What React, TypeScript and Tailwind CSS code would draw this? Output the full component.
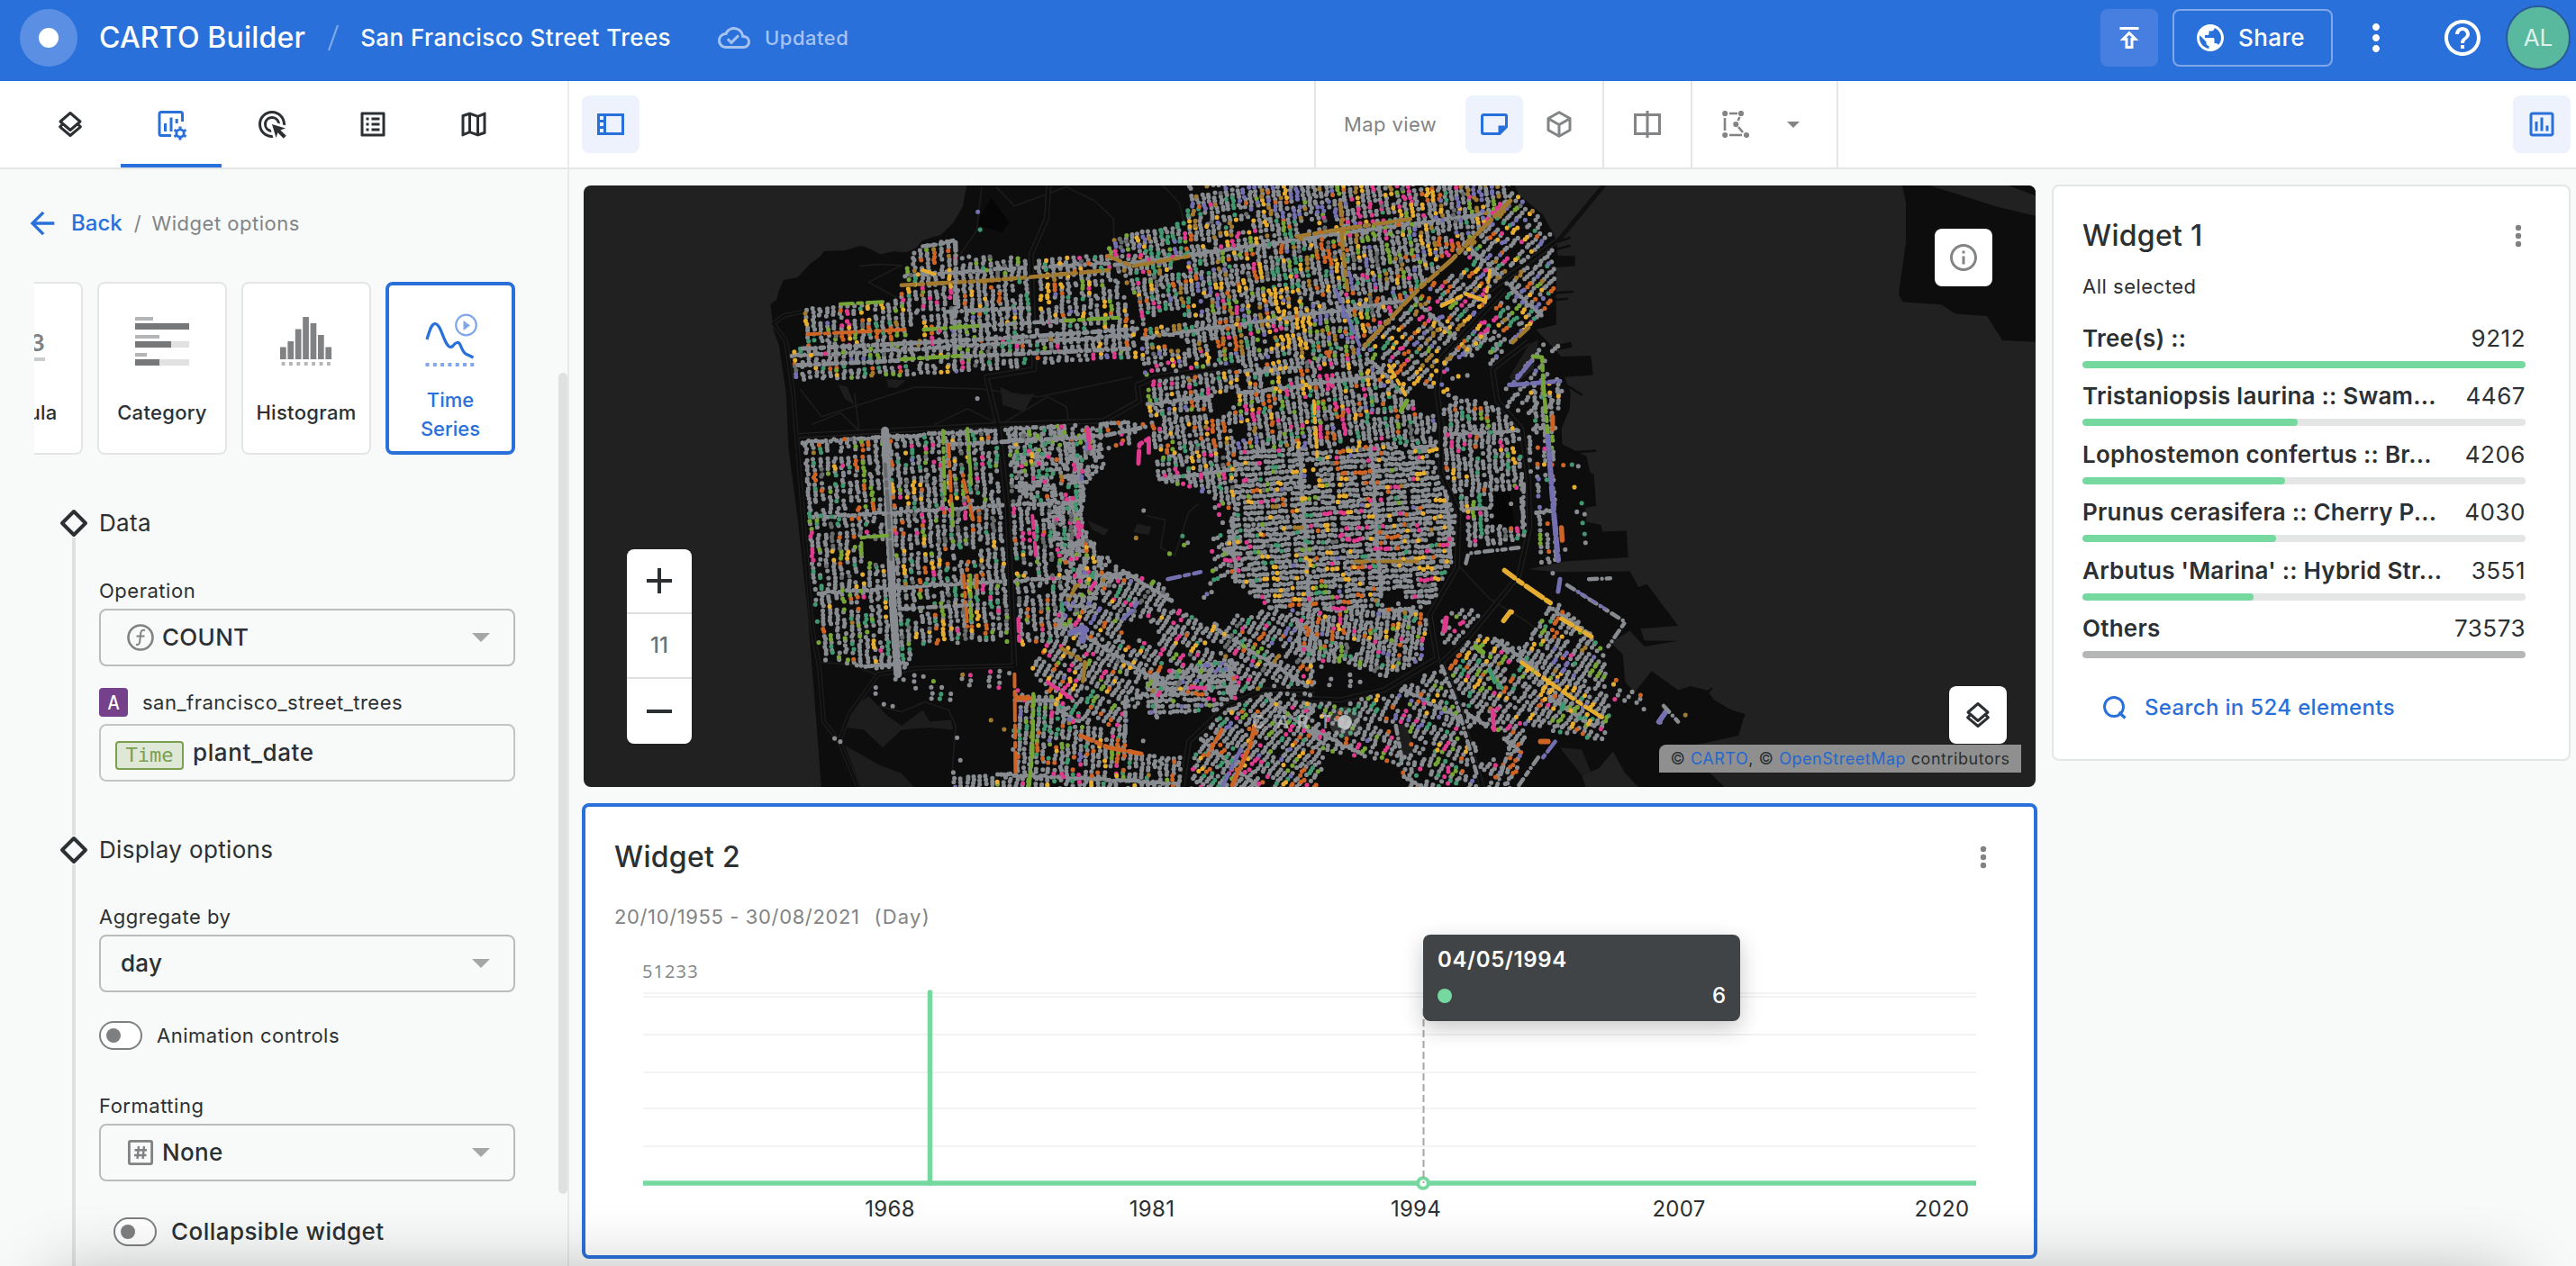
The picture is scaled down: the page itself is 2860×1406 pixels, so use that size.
import { useMemo } from "react";
import type { ReactNode } from "react";
import {
  MdAdsClick,
  MdArrowBack,
  MdHelpOutline,
  MdInfoOutline,
  MdMoreVert,
  MdOutlineCloudDone,
  MdOutlineInsertChartOutlined,
  MdOutlineListAlt,
  MdOutlineMap,
  MdOutlinePublish,
  MdPublic,
} from "react-icons/md";

/* ------------------------------------------------------------------ */
/* Map geometry: two base sheets, west and east, in their own units    */
/* ------------------------------------------------------------------ */

type Pt = [number, number];

function pairs(nums: number[], ox: number, sx: number): Pt[] {
  const out: Pt[] = [];
  for (let i = 0; i < nums.length; i += 2) out.push([ox + nums[i] * sx, 190 + nums[i + 1] * 0.44]);
  return out;
}
const W = (...n: number[]) => pairs(n, 640, 0.523);
const E = (...n: number[]) => pairs(n, 1440, 0.5357);

const LAND: Pt[] = [
  ...W(829, 30, 820, 90, 800, 130, 775, 160, 735, 175, 720, 195, 700, 205, 672, 203, 645, 210, 625, 198, 605, 188, 570, 200, 525, 202, 518, 215, 495, 235, 470, 268, 440, 275, 430, 300, 425, 325, 412, 335, 418, 400, 430, 440, 445, 560, 450, 700, 470, 880, 490, 1100, 500, 1250, 510, 1400, 520, 1560),
  ...E(600, 1560, 590, 1525, 625, 1508, 655, 1465, 680, 1520, 712, 1560, 890, 1560, 840, 1500, 820, 1450, 915, 1425, 928, 1370, 900, 1360, 865, 1335, 850, 1310, 815, 1300, 790, 1310, 735, 1262, 700, 1315, 680, 1290, 675, 1220, 650, 1190, 690, 1160, 720, 1200, 790, 1186, 720, 1185, 712, 1155, 790, 1148, 725, 1042, 708, 1050, 690, 1010, 540, 1012, 480, 1005, 555, 985, 686, 975, 683, 908, 633, 910, 630, 893, 600, 885, 598, 850, 620, 845, 615, 765, 608, 762, 600, 720, 550, 690, 548, 650, 565, 600, 567, 560, 555, 520, 614, 515, 609, 466, 548, 468, 495, 400, 537, 388, 537, 243, 576, 240, 576, 215, 540, 213, 538, 175, 510, 110, 460, 60, 450, 30),
];
const ISLAND = E(1253, 30, 1262, 80, 1262, 180, 1247, 310, 1255, 330, 1335, 337, 1365, 360, 1430, 366, 1462, 427, 1540, 432, 1540, 116, 1450, 90, 1300, 32);
const ISLAND_2 = E(1460, 30, 1540, 66, 1540, 30);

const LIGHT_PATCHES: Pt[][] = [
  W(580, 1360, 620, 1325, 660, 1375, 690, 1400, 735, 1360, 750, 1390, 795, 1385, 800, 1410, 750, 1405, 690, 1410, 650, 1455, 610, 1410, 575, 1405),
  W(570, 1450, 600, 1470, 645, 1500, 690, 1520, 720, 1560, 605, 1560),
  W(555, 538, 575, 545, 590, 590, 570, 575),
  W(658, 525, 700, 528, 680, 548, 662, 545),
  W(900, 545, 935, 565, 972, 562, 950, 608, 905, 590),
  W(797, 915, 840, 918, 838, 948, 793, 945),
  W(1190, 890, 1220, 898, 1215, 918, 1182, 912),
  W(1085, 882, 1130, 905, 1120, 920, 1095, 905),
  E(200, 1400, 225, 1395, 245, 1465, 220, 1480),
  E(545, 1455, 590, 1460, 610, 1520, 590, 1525),
  E(440, 520, 480, 440, 500, 425, 490, 500, 452, 540),
];
const DARK_PATCHES: Pt[][] = [
  W(880, 68, 918, 128, 905, 155, 848, 135),
  E(410, 805, 440, 805, 452, 900, 400, 900),
];

const FREEWAYS: Pt[][] = [
  E(430, 300, 300, 470, 290, 560, 300, 640, 298, 760, 335, 860, 332, 1000, 275, 1120, 290, 1230, 180, 1310, 90, 1335, 0, 1330),
  E(480, 430, 405, 500, 415, 580, 465, 650, 480, 780, 482, 900, 460, 1020, 360, 1170, 300, 1240, 335, 1350, 385, 1560),
  W(1568, 1310, 1460, 1310, 1380, 1350, 1300, 1440, 1285, 1560),
  W(1003, 30, 998, 120, 965, 210, 972, 500, 870, 520, 895, 640, 905, 740, 915, 850, 930, 1250),
  W(1400, 492, 1230, 520, 1190, 540, 1195, 580, 1120, 630, 900, 640, 470, 668),
  E(540, 175, 400, 300),
];
const ROADS: Pt[][] = [
  W(480, 355, 440, 365, 418, 385, 445, 430, 460, 560, 475, 780, 500, 1150, 515, 1250, 525, 1390, 558, 1440, 600, 1560),
  W(558, 1440, 580, 1370, 640, 1270, 720, 1255, 930, 1248),
  W(520, 1240, 580, 1245, 640, 1272, 700, 1265),
  W(600, 240, 640, 235, 690, 238, 620, 280, 680, 320),
  W(475, 550, 520, 620, 600, 590, 720, 545, 860, 550, 980, 570, 1140, 530, 1180, 520),
  W(500, 640, 560, 610, 600, 655, 590, 560),
  W(760, 640, 830, 600, 900, 640, 1000, 570, 1040, 595, 1045, 630),
  W(890, 40, 930, 88, 1040, 40, 1100, 75, 1140, 120, 1142, 210),
  W(860, 40, 850, 150, 815, 210),
  W(640, 1350, 690, 1365, 740, 1340, 790, 1360, 805, 1400, 798, 1510),
  W(1210, 870, 1250, 880, 1240, 950, 1270, 970, 1300, 860, 1320, 840),
  W(1240, 30, 1280, 80, 1290, 130),
  E(330, 990, 400, 1080, 480, 1140, 510, 1170),
];

const HOLES: Pt[][] = [
  W(1112, 705, 1185, 688, 1195, 740, 1235, 780, 1330, 812, 1362, 860, 1345, 950, 1320, 1010, 1240, 1030, 1165, 1008, 1110, 950, 1078, 890, 1080, 790, 1120, 745),
  W(1350, 560, 1395, 545, 1408, 580, 1380, 610, 1345, 632),
  W(1385, 640, 1420, 640, 1430, 672, 1400, 682),
  W(1212, 362, 1290, 348, 1292, 385, 1215, 392),
  W(1225, 425, 1290, 410, 1285, 435, 1228, 445),
  W(1190, 1120, 1240, 1150, 1235, 1205, 1165, 1200, 1158, 1160),
  W(1245, 1040, 1320, 1030, 1330, 1080, 1385, 1060, 1388, 1140, 1330, 1130, 1270, 1090),
  W(1180, 1392, 1330, 1385, 1320, 1470, 1200, 1475),
  W(770, 1190, 880, 1185, 960, 1200, 970, 1240, 740, 1238),
  W(790, 950, 860, 955, 850, 985, 785, 985),
  W(605, 935, 655, 930, 660, 990, 605, 990),
  W(712, 365, 732, 365, 732, 425, 710, 425),
  W(1265, 225, 1297, 220, 1300, 258, 1262, 258),
  W(1300, 315, 1335, 310, 1340, 350, 1310, 355),
  W(1445, 418, 1480, 415, 1482, 445, 1445, 448),
  W(1400, 125, 1432, 122, 1435, 150, 1402, 152),
  W(1530, 125, 1568, 120, 1568, 160, 1532, 160),
  E(20, 730, 40, 730, 40, 785, 20, 785),
  E(150, 1110, 185, 1062, 215, 1060, 255, 1095, 200, 1105),
  E(108, 1190, 130, 1188, 132, 1218, 110, 1218),
  E(405, 805, 465, 805, 465, 895, 400, 895),
  E(365, 700, 392, 700, 392, 725, 365, 725),
  E(385, 1040, 430, 1010, 520, 1095, 470, 1200, 400, 1160, 380, 1110),
  E(60, 1470, 150, 1480, 215, 1500, 225, 1560, 50, 1560),
  E(195, 1395, 225, 1395, 245, 1465, 215, 1480),
  E(360, 1390, 430, 1420, 440, 1500, 375, 1490),
  E(595, 1075, 660, 1140, 620, 1185, 575, 1120),
  E(320, 480, 400, 440, 400, 560, 330, 570, 305, 520),
  E(290, 230, 345, 195, 355, 235, 300, 280),
  E(250, 540, 300, 555, 290, 620, 250, 600),
  E(0, 110, 40, 110, 40, 150, 0, 150),
];

// order: grey, teal, orange, green, pink, yellow, brown, purple, dim grey
const COLORS = ["#888c90", "#41976f", "#cd6425", "#75a537", "#dd3b8d", "#e4ac31", "#a17a30", "#7470b0", "#666a6b"];

interface District {
  area: Pt[];
  angle: number;
  dx: number;
  dy: number;
  density: number;
  mix: number[];
}

const DISTRICTS: District[] = [
  { area: W(478, 345, 690, 325, 690, 225, 735, 182, 805, 175, 812, 215, 1130, 215, 1170, 330, 1200, 468, 980, 490, 700, 515, 463, 528, 452, 455, 492, 440), angle: -3.5, dx: 7.7, dy: 3.9, density: 0.88, mix: [68, 7, 6, 5, 4, 5, 2, 2, 3] },
  { area: [...W(1130, 170, 1230, 145, 1297, 125, 1297, 30, 1568, 30), ...E(100, 30, 440, 30, 430, 90, 300, 240, 170, 400, 0, 500), ...W(1450, 510, 1200, 490, 1195, 330, 1130, 215)], angle: -8, dx: 6.5, dy: 4, density: 0.88, mix: [58, 8, 6, 4, 4, 11, 6, 6, 2] },
  { area: E(440, 40, 500, 110, 535, 180, 533, 335, 480, 395, 430, 445, 400, 490, 300, 560, 180, 560, 130, 440, 200, 370, 330, 230), angle: 44, dx: 7.6, dy: 4, density: 0.76, mix: [52, 9, 8, 3, 6, 10, 5, 9, 2] },
  { area: [...W(1205, 500, 1450, 500), ...E(0, 490, 120, 430, 190, 560, 290, 600, 290, 700, 0, 700), ...W(1400, 700, 1395, 860, 1330, 810, 1235, 780, 1230, 700, 1212, 640)], angle: -7, dx: 6.6, dy: 4, density: 0.88, mix: [66, 8, 7, 5, 6, 6, 2, 3, 2] },
  { area: W(475, 672, 650, 652, 900, 642, 1130, 628, 1212, 640, 1200, 680, 1112, 705, 1120, 745, 1078, 800, 1075, 900, 1140, 980, 1165, 1010, 1080, 1110, 1020, 1180, 990, 1200, 850, 1205, 740, 1190, 690, 1270, 560, 1240, 518, 1242), angle: -3.5, dx: 7.8, dy: 4, density: 0.77, mix: [67, 8, 6, 6, 4, 3, 1, 1, 4] },
  { area: W(920, 660, 1120, 650, 1110, 745, 1075, 800, 1075, 900, 1130, 1000, 1040, 1010, 990, 860, 930, 800), angle: -3.5, dx: 7.8, dy: 4.4, density: 0.5, mix: [85, 5, 3, 2, 6, 1, 0, 0, 0] },
  { area: [...W(1400, 700, 1568, 700), ...E(290, 700, 295, 770, 330, 870, 320, 990, 285, 1080, 250, 1110, 0, 1110), ...W(1480, 1110, 1400, 1040, 1370, 970, 1395, 860)], angle: 86, dx: 6.2, dy: 3.8, density: 0.97, mix: [80, 4, 3, 2, 3, 8, 1, 1, 1] },
  { area: E(310, 560, 440, 600, 465, 660, 470, 800, 475, 930, 350, 960, 345, 880, 305, 770, 300, 640), angle: -3, dx: 6.8, dy: 4, density: 0.88, mix: [80, 8, 3, 2, 3, 2, 0, 1, 1] },
  { area: E(490, 540, 550, 520, 548, 560, 535, 650, 530, 760, 550, 980, 495, 998, 485, 900, 480, 680), angle: -2, dx: 8.4, dy: 4.4, density: 0.68, mix: [78, 5, 4, 3, 2, 3, 1, 6, 0] },
  { area: E(490, 440, 540, 420, 550, 560, 500, 620, 440, 610, 420, 560, 450, 510), angle: 40, dx: 12, dy: 4.6, density: 0.42, mix: [84, 6, 2, 2, 1, 1, 0, 5, 0] },
  { area: E(300, 440, 400, 400, 430, 450, 400, 520, 430, 600, 320, 570, 300, 520), angle: 44, dx: 9, dy: 4.6, density: 0.5, mix: [78, 7, 4, 3, 2, 3, 0, 5, 0] },
  { area: W(1240, 860, 1360, 830, 1400, 960, 1370, 1080, 1320, 1080, 1330, 990, 1230, 980), angle: 60, dx: 10, dy: 4.6, density: 0.48, mix: [68, 15, 3, 8, 4, 2, 0, 5, 0] },
  { area: W(1080, 800, 1120, 745, 1195, 740, 1235, 780, 1210, 900, 1110, 880), angle: 20, dx: 14, dy: 6, density: 0.2, mix: [60, 40, 0, 0, 0, 0, 0, 0, 0] },
  { area: W(1040, 1010, 1165, 1008, 1245, 1040, 1270, 1100, 1350, 1150, 1390, 1120, 1480, 1100, 1568, 1150, 1568, 1300, 1440, 1310, 1200, 1330, 1160, 1400, 1040, 1390, 980, 1290, 960, 1240, 1010, 1180), angle: 32, dx: 7, dy: 4, density: 0.8, mix: [68, 7, 6, 5, 7, 4, 1, 3, 2] },
  { area: [...W(1210, 1270, 1400, 1230, 1400, 1370, 1210, 1380)], angle: 88, dx: 6.4, dy: 4, density: 0.88, mix: [84, 4, 4, 2, 2, 2, 0, 3, 0] },
  { area: E(0, 1105, 250, 1110, 275, 1130, 262, 1230, 180, 1280, 100, 1240, 0, 1240), angle: 8, dx: 5.9, dy: 4, density: 0.95, mix: [72, 4, 8, 3, 5, 8, 1, 1, 1] },
  { area: W(640, 1270, 920, 1250, 960, 1300, 920, 1330, 820, 1330, 650, 1365, 630, 1310), angle: 5, dx: 10.5, dy: 6, density: 0.36, mix: [68, 6, 7, 7, 7, 4, 3, 1, 0] },
  { area: W(930, 1320, 1020, 1330, 1060, 1400, 1160, 1400, 1180, 1470, 1290, 1480, 1280, 1560, 800, 1560, 800, 1530, 925, 1520), angle: 3, dx: 6.9, dy: 4, density: 0.84, mix: [69, 7, 6, 6, 6, 3, 1, 2, 0] },
  { area: [...W(1320, 1400, 1400, 1340, 1480, 1310, 1568, 1310), ...E(30, 1340, 60, 1480, 40, 1560), ...W(1300, 1560)], angle: 40, dx: 6.8, dy: 4, density: 0.88, mix: [69, 7, 8, 5, 4, 5, 0, 2, 1] },
  { area: E(0, 1340, 90, 1335, 200, 1315, 300, 1250, 335, 1340, 370, 1450, 385, 1560, 220, 1560, 215, 1500, 60, 1465), angle: 28, dx: 7.2, dy: 4.1, density: 0.74, mix: [69, 8, 6, 6, 6, 3, 0, 3, 0] },
  { area: E(325, 1200, 380, 1170, 470, 1200, 500, 1260, 560, 1330, 640, 1400, 645, 1440, 560, 1420, 480, 1400, 445, 1560, 385, 1560, 345, 1350, 310, 1250), angle: 36, dx: 7, dy: 4, density: 0.8, mix: [69, 7, 7, 5, 5, 5, 1, 2, 0] },
  { area: E(460, 1210, 510, 1100, 545, 1095, 610, 1160, 640, 1230, 645, 1330, 655, 1400, 600, 1400, 520, 1330), angle: 33, dx: 7, dy: 4, density: 0.9, mix: [73, 4, 4, 4, 3, 8, 2, 4, 0] },
  { area: E(330, 1110, 370, 1090, 390, 1150, 330, 1200, 285, 1190, 300, 1120), angle: 40, dx: 8, dy: 5, density: 0.55, mix: [90, 2, 3, 1, 2, 2, 0, 0, 0] },
  { area: E(645, 1270, 700, 1310, 745, 1350, 780, 1390, 745, 1395, 700, 1345, 640, 1330), angle: 40, dx: 11, dy: 6, density: 0.5, mix: [60, 0, 12, 4, 10, 6, 0, 8, 0] },
  { area: E(0, 1240, 180, 1275, 120, 1300, 0, 1300), angle: 5, dx: 11, dy: 6, density: 0.45, mix: [84, 5, 5, 2, 2, 2, 0, 0, 0] },
];

// Streets planted with a single species: [colour index, width, path]
const STREETS: [number, number, Pt[]][] = [
  [0, 9, W(655, 655, 662, 850, 672, 1100, 682, 1270)],
  [8, 4, W(655, 740, 662, 850, 668, 980)],
  [6, 4.6, W(690, 288, 850, 278, 960, 268, 1130, 250)],
  [5, 4, W(735, 250, 760, 260)],
  [0, 5, W(790, 355, 960, 345)],
  [0, 5, W(805, 180, 803, 500)],
  [3, 4.3, W(738, 400, 860, 390)],
  [2, 4, W(490, 412, 700, 400)],
  [0, 5, W(480, 448, 700, 435, 960, 418, 1190, 398)],
  [3, 4.3, W(690, 475, 820, 466)],
  [0, 5, W(470, 490, 690, 478)],
  [0, 5, W(820, 468, 1180, 448)],
  [3, 4.3, W(1030, 378, 1150, 370)],
  [0, 4.5, W(860, 390, 1030, 378)],
  [3, 4, W(560, 336, 650, 330)],
  [0, 5, W(790, 690, 960, 680, 1120, 668, 1210, 645)],
  [3, 4, W(778, 655, 782, 830)],
  [3, 4, W(830, 650, 838, 790)],
  [2, 4, W(790, 690, 796, 840)],
  [3, 4, W(797, 840, 800, 905)],
  [2, 4, W(822, 780, 842, 880)],
  [3, 4, W(605, 970, 605, 925, 660, 920)],
  [2, 4, W(822, 1020, 830, 1150)],
  [3, 4, W(836, 1020, 838, 1130)],
  [2, 4, W(850, 1020, 850, 1060)],
  [0, 4.5, W(690, 1105, 840, 1095)],
  [4, 4.5, W(938, 1130, 940, 1195)],
  [4, 4, W(968, 870, 975, 970)],
  [4, 5, W(1193, 738, 1195, 690, 1215, 675, 1215, 710)],
  [4, 5, W(1085, 650, 1090, 700)],
  [3, 4.5, W(970, 1320, 968, 1470, 960, 1560)],
  [2, 4, W(930, 1270, 932, 1520)],
  [2, 5, W(1070, 1425, 1130, 1455, 1205, 1472)],
  [2, 5, W(1440, 1400, 1430, 1450, 1390, 1556)],
  [7, 4.5, W(1410, 1460, 1370, 1556)],
  [2, 4.5, W(1370, 1410, 1340, 1475)],
  [7, 7, W(1050, 1165, 1080, 1150, 1075, 1185)],
  [7, 4.5, W(1255, 1030, 1325, 1012)],
  [7, 4.5, W(1160, 1130, 1180, 1110, 1195, 1080)],
  [6, 4.5, W(1030, 1205, 1080, 1240, 1075, 1290)],
  [2, 6, W(935, 1330, 960, 1330)],
  [4, 4.5, W(1000, 1290, 1050, 1330)],
  [0, 5, W(1165, 1420, 1165, 1340, 1210, 1320)],
  [0, 4.5, W(735, 190, 770, 185, 800, 175)],
  [6, 4.5, W(1130, 215, 1180, 240, 1300, 215)],
  [6, 5, E(442, 75, 380, 150, 320, 225, 250, 300, 180, 390, 140, 440)],
  [6, 4.5, E(0, 165, 100, 145, 240, 120)],
  [6, 4.5, E(90, 80, 95, 200, 105, 300)],
  [5, 4.5, E(300, 340, 350, 310, 395, 330)],
  [5, 4, E(400, 250, 390, 330)],
  [6, 4.5, E(480, 395, 440, 440)],
  [5, 4, E(190, 490, 225, 565)],
  [7, 4, E(80, 300, 130, 440)],
  [7, 5, E(485, 480, 445, 540, 545, 530)],
  [3, 4.5, E(490, 468, 508, 470, 510, 530, 515, 600, 520, 660)],
  [2, 5, E(530, 620, 530, 660)],
  [7, 6, E(520, 670, 528, 800, 535, 900, 542, 990)],
  [2, 5.5, E(548, 900, 550, 938)],
  [7, 5, E(545, 1030, 540, 1070)],
  [5, 5.5, E(430, 1008, 460, 1035, 525, 1090)],
  [5, 5.5, E(428, 1135, 442, 1112, 450, 1115)],
  [0, 4.5, E(350, 990, 355, 965, 465, 950)],
  [0, 4.5, E(560, 1045, 680, 1138, 645, 1200)],
  [7, 3, E(580, 1060, 640, 1105)],
  [5, 5, E(548, 1130, 610, 1175)],
  [5, 4.5, E(465, 1240, 570, 1330, 640, 1385)],
  [0, 4.5, E(605, 1030, 650, 1028)],
  [3, 6, E(370, 1200, 385, 1215)],
  [7, 6, E(750, 1390, 770, 1355)],
  [0, 4.5, E(760, 1350, 790, 1390)],
  [4, 6, E(305, 1160, 310, 1122)],
  [5, 4, E(35, 580, 42, 720)],
  [6, 4, E(120, 985, 250, 985)],
  [4, 5, E(405, 1360, 408, 1410)],
  [2, 6, E(505, 1440, 520, 1440)],
  [7, 4.5, E(535, 1440, 510, 1480)],
  [0, 4.5, E(500, 1480, 460, 1550)],
  [0, 4.5, E(445, 1440, 415, 1550)],
  [1, 5, E(400, 1260, 410, 1290, 430, 1310)],
  [3, 5, E(215, 605, 228, 580)],
  [0, 4.5, E(470, 790, 468, 900)],
  [0, 4.5, E(205, 1400, 218, 1490)],
  [0, 4.5, E(300, 1250, 330, 1340, 372, 1520)],
];

const SINGLES: [number, Pt[]][] = [
  [7, W(852, 103)],
  [1, W(857, 148)],
  [0, W(851, 574, 1525, 682, 1355, 1143, 1203, 1438, 808, 1430, 560, 1440, 548, 1432, 815, 1487, 720, 1305, 800, 1518)],
  [6, W(1188, 926, 908, 1409, 880, 1386)],
  [1, E(590, 838, 570, 741, 592, 888, 596, 916)],
  [0, E(583, 745, 598, 938, 596, 866, 580, 860, 556, 955, 530, 1015)],
  [5, E(575, 798)],
  [6, E(805, 1373)],
  [2, E(712, 1323, 552, 742)],
];

function createRandom(seed: number) {
  let s = seed;
  return () => {
    s = (s + 0x6d2b79f5) | 0;
    let t = Math.imul(s ^ (s >>> 15), 1 | s);
    t = (t + Math.imul(t ^ (t >>> 7), 61 | t)) ^ t;
    return ((t ^ (t >>> 14)) >>> 0) / 4294967296;
  };
}

function inside(x: number, y: number, poly: Pt[]) {
  let hit = false;
  for (let i = 0, j = poly.length - 1; i < poly.length; j = i++) {
    const [xi, yi] = poly[i];
    const [xj, yj] = poly[j];
    if (yi > y !== yj > y && x < ((xj - xi) * (y - yi)) / (yj - yi) + xi) hit = !hit;
  }
  return hit;
}

function distance(x: number, y: number, line: Pt[]) {
  let best = 1e9;
  for (let i = 1; i < line.length; i++) {
    const [ax, ay] = line[i - 1];
    const [bx, by] = line[i];
    const dx = bx - ax;
    const dy = by - ay;
    const t = Math.max(0, Math.min(1, ((x - ax) * dx + (y - ay) * dy) / (dx * dx + dy * dy || 1)));
    best = Math.min(best, Math.hypot(x - ax - t * dx, y - ay - t * dy));
  }
  return best;
}

const toPath = (pts: Pt[], close = false) =>
  "M" + pts.map(([x, y]) => `${x.toFixed(1)} ${y.toFixed(1)}`).join("L") + (close ? "Z" : "");

function buildTrees() {
  const rnd = createRandom(20211);
  const paths = COLORS.map(() => [] as string[]);
  const bias = Array.from({ length: 64 * 32 }, () => [1 + Math.floor(rnd() * 7), rnd()] as [number, number]);

  for (const d of DISTRICTS) {
    const xs = d.area.map((p) => p[0]);
    const ys = d.area.map((p) => p[1]);
    const x0 = Math.min(...xs);
    const x1 = Math.max(...xs);
    const y0 = Math.min(...ys);
    const y1 = Math.max(...ys);
    const cx = (x0 + x1) / 2;
    const cy = (y0 + y1) / 2;
    const r = Math.hypot(x1 - x0, y1 - y0) / 2;
    const a = (d.angle * Math.PI) / 180;
    const cos = Math.cos(a);
    const sin = Math.sin(a);
    const total = d.mix.reduce((s, n) => s + n, 0);
    const cols = Math.ceil(r / d.dx);
    const rows = Math.ceil(r / d.dy);

    const plant = (u: number, v: number, keep: number, fixed?: number) => {
      const pu = u + (rnd() - 0.5) * 2.2;
      const pv = v + (rnd() - 0.5) * 2.2;
      const x = cx + pu * cos - pv * sin;
      const y = cy + pu * sin + pv * cos;
      if (x < 645 || x > 2262 || y < 203 || y > 877) return keep;
      if (!inside(x, y, d.area)) return keep;
      if (HOLES.some((h) => inside(x, y, h)) && rnd() > 0.06) return keep;
      if (FREEWAYS.some((f) => distance(x, y, f) < 3.6)) return keep;
      let color = keep;
      if (fixed !== undefined) color = fixed;
      else if (rnd() < 0.7) {
        let pick = rnd() * total;
        color = 0;
        while (pick > d.mix[color]) pick -= d.mix[color++];
        const cell = bias[(Math.floor(x / 44) % 64) + 64 * (Math.floor(y / 40) % 32)];
        if (color > 0 && d.mix[cell[0]] > 2 && rnd() < cell[1] * 0.5) color = cell[0];
      }
      color = Math.min(color, 8);
      paths[color].push(`M${x.toFixed(1)} ${y.toFixed(1)}h0`);
      return color;
    };

    for (let i = -cols; i <= cols; i++) {
      let color = 0;
      let left = 0;
      let on = true;
      for (let k = -rows; k <= rows; k++) {
        if (left-- <= 0) {
          on = rnd() < d.density;
          left = on ? 1 + Math.floor(rnd() * 4) : Math.floor(rnd() * 2);
        }
        const row = ((k % 21) + 21) % 21;
        if (row === 10 && d.density > 0.65) {
          plant(i * d.dx + d.dx / 2, k * d.dy, 0, rnd() < 0.8 ? 0 : undefined);
          plant(i * d.dx, k * d.dy, 0, rnd() < 0.8 ? 0 : undefined);
          continue;
        }
        if (row % 7 === 0 && rnd() < 0.55) continue;
        if (on) color = plant(i * d.dx, k * d.dy, color);
      }
    }
  }
  for (const [color, pts] of SINGLES) for (const [x, y] of pts) paths[color].push(`M${x.toFixed(1)} ${y.toFixed(1)}h0`);
  return paths.map((p) => p.join(""));
}

function StreetTreeMap() {
  const trees = useMemo(buildTrees, []);
  return (
    <svg viewBox="648 206 1612 668" className="block h-full w-full">
      <rect x="648" y="206" width="1612" height="668" fill="#212121" />
      <g fill="#0d0d0d">
        <path d={toPath(LAND, true)} />
        <path d={toPath(ISLAND, true)} />
        <path d={toPath(ISLAND_2, true)} />
      </g>
      <path d={toPath(E(640, 30, 540, 178))} stroke="#101010" strokeWidth="5" fill="none" />
      <g stroke="#0d0d0d" strokeWidth="2.5" fill="none">
        <path d={toPath(E(535, 180, 567, 168))} />
        <path d={toPath(E(535, 198, 567, 188))} />
        <path d={toPath(E(535, 308, 573, 304))} />
        <path d={toPath(E(535, 325, 562, 322))} />
        <path d={toPath(E(540, 445, 569, 438))} strokeWidth="6" />
        <path d={toPath(E(560, 542, 591, 565))} />
        <path d={toPath(E(570, 710, 620, 706))} />
        <path d={toPath(E(900, 1366, 928, 1376))} />
        <path d={toPath(E(840, 1330, 860, 1305))} />
      </g>
      <g fill="#1d1d1d">
        {LIGHT_PATCHES.map((p, i) => (
          <path key={i} d={toPath(p, true)} />
        ))}
      </g>
      <g fill="#060606">
        {DARK_PATCHES.map((p, i) => (
          <path key={i} d={toPath(p, true)} />
        ))}
      </g>
      <g fill="none" strokeLinejoin="round">
        {ROADS.map((p, i) => (
          <path key={i} d={toPath(p)} stroke="#1c1c1c" strokeWidth={i < 2 ? 5 : 1.6} />
        ))}
        {FREEWAYS.map((p, i) => (
          <path key={i} d={toPath(p)} stroke="#1e1e1e" strokeWidth="6" />
        ))}
        {FREEWAYS.map((p, i) => (
          <path key={i} d={toPath(p)} stroke="#0d0d0d" strokeWidth="3.4" />
        ))}
        {ROADS.slice(0, 2).map((p, i) => (
          <path key={i} d={toPath(p)} stroke="#0d0d0d" strokeWidth="2.4" />
        ))}
      </g>
      <g fill="none" strokeLinecap="round" strokeWidth="5.1">
        {trees.map((d, i) => (
          <path key={i} d={d} stroke={COLORS[i]} />
        ))}
      </g>
      <g fill="none" strokeLinecap="round" strokeLinejoin="round">
        {STREETS.map(([c, w, pts], i) => (
          <path key={i} d={toPath(pts)} stroke={COLORS[c]} strokeWidth={w} strokeDasharray={c === 0 && w < 8 ? "9 5.5 0 5.2 4 5.6" : "14 5.2 5 5.5 22 5"} />
        ))}
      </g>
      <circle cx="1493" cy="802" r="17" fill="#b9bcbe" fillOpacity="0.2" />
      <g fill="#c3c6c8" fillOpacity="0.7" className="font-[Inter] text-[20px] font-semibold">
        <text x="1390" y="809">C</text>
        <text x="1417" y="809">A</text>
        <text x="1440" y="809">R</text>
        <text x="1465" y="809">T</text>
        <circle cx="1493" cy="802" r="8" fillOpacity="0.9" />
      </g>
    </svg>
  );
}

/* ------------------------------------------------------------------ */
/* Icons                                                               */
/* ------------------------------------------------------------------ */

function LayersIcon() {
  return (
    <svg viewBox="0 0 36 36" className="size-9" fill="none" stroke="currentColor" strokeWidth="3">
      <path d="M18 5.5 29 15 18 24.500 7 15Z" strokeLinejoin="round" />
      <path d="M10 17.500 6.600 20.800 18 30.500 29.400 20.800 26 17.500" strokeLinejoin="round" />
    </svg>
  );
}

function WidgetsTabIcon() {
  return (
    <svg viewBox="0 0 36 36" className="size-9" fill="none" stroke="currentColor">
      <path d="M30.500 15V6.500a2 2 0 0 0-2-2H7a2 2 0 0 0-2 2v22a2 2 0 0 0 2 2h11" strokeWidth="3" />
      <path d="M11.500 26V17M18 26V10.500M24.200 17v-5" strokeWidth="3" />
      <circle cx="28" cy="28" r="4.200" strokeWidth="2.800" />
      <path d="M28 20.500v3M28 32.500v3M21.500 24.200l2.600 1.500M31.900 30.200l2.600 1.500M21.500 31.700l2.600-1.500M31.900 25.700l2.600-1.500" strokeWidth="3" />
    </svg>
  );
}

function PanelIcon() {
  return (
    <svg viewBox="0 0 30 24" className="h-6 w-[30px]" fill="none" stroke="currentColor" strokeWidth="3">
      <path d="M1.500 1.500h27v21h-27ZM8.500 1v22M1 8.500h7M1 15.500h7" />
    </svg>
  );
}

function FlatMapIcon() {
  return (
    <svg viewBox="0 0 30 24" className="h-6 w-[30px]">
      <path d="M3 1.500h24a1.500 1.500 0 0 1 1.500 1.500v12L21 22.500H3A1.500 1.500 0 0 1 1.500 21V3A1.500 1.500 0 0 1 3 1.500Z" fill="none" stroke="currentColor" strokeWidth="3" />
      <path d="M19.500 13.500H29L19.500 23.500Z" fill="currentColor" />
    </svg>
  );
}

function CubeIcon() {
  return (
    <svg viewBox="0 0 28 30" className="h-[30px] w-7" fill="none" stroke="currentColor" strokeWidth="3" strokeLinejoin="round">
      <path d="M14 1.800 26 8.500V21.500L14 28.200 2 21.500V8.500ZM2.500 9 14 15.500 25.500 9M14 15.500V28" />
    </svg>
  );
}

function SplitIcon() {
  return (
    <svg viewBox="0 0 30 30" className="size-[30px]" fill="none" stroke="currentColor" strokeWidth="3">
      <path d="M1.500 4.500h27v21h-27ZM15 0v30" />
    </svg>
  );
}

function LassoIcon() {
  return (
    <svg viewBox="0 0 30 30" className="size-[30px]" fill="currentColor" stroke="currentColor">
      <path d="M8 3h9M3 8v14M8 27h14M19.500 7 17.500 11M18 18l5 6" fill="none" strokeWidth="2.600" />
      <g stroke="none">
        <circle cx="3.200" cy="3" r="3.100" />
        <circle cx="21" cy="3" r="3.100" />
        <circle cx="15.300" cy="15" r="3.100" />
        <circle cx="3.200" cy="27" r="3.100" />
        <circle cx="27" cy="27" r="3.100" />
      </g>
    </svg>
  );
}

function Caret({ className }: { className: string }) {
  return (
    <svg viewBox="0 0 20 10" className={className} fill="currentColor">
      <path d="M0 0h20L10 10Z" />
    </svg>
  );
}

function FunctionIcon() {
  return (
    <svg viewBox="0 0 30 30" className="size-[30px]" fill="none" stroke="currentColor" strokeWidth="2.600">
      <circle cx="15" cy="15" r="13.500" />
      <path d="M20 7c-3-.8-4.500.500-4.800 3.500l-1 9c-.3 3-1.800 4-4.200 3.200M10.500 13.500h9" strokeWidth="2" />
    </svg>
  );
}

function HashIcon() {
  return (
    <svg viewBox="0 0 28 28" className="size-7" fill="none" stroke="currentColor" strokeWidth="2.800">
      <rect x="1.400" y="1.400" width="25.200" height="25.200" rx="1.500" />
      <path d="M12 7 10.500 21M18 7l-1.500 14M7.500 11.300h13.500M7 17h13.500" strokeWidth="2.400" />
    </svg>
  );
}

function SearchIcon() {
  return (
    <svg viewBox="0 0 26 26" className="size-[26px]" fill="none" stroke="currentColor" strokeWidth="2.900">
      <circle cx="12" cy="12" r="10.500" />
      <path d="M17.500 18l7 6.500" strokeWidth="3.400" />
    </svg>
  );
}

function Dots({ className }: { className: string }) {
  return (
    <svg viewBox="0 0 8 26" className={className} fill="currentColor">
      <circle cx="4" cy="4" r="3.200" />
      <circle cx="4" cy="13" r="3.200" />
      <circle cx="4" cy="22" r="3.200" />
    </svg>
  );
}

function CategoryArt() {
  return (
    <svg viewBox="0 0 60 56" className="h-14 w-[60px]">
      <g fill="#b4b5b6">
        <path d="M0 0h20v4H0ZM0 20h27v4H0ZM0 40h13v4H0Z" />
      </g>
      <path d="M0 27h60v7H0ZM0 47h60v7H0Z" fill="#e1e1e1" />
      <path d="M0 7h60v7H0ZM0 27h40v7H0ZM0 47h27v7H0Z" fill="#757779" />
    </svg>
  );
}

function HistogramArt() {
  const heights = [13.5, 20, 33.5, 47, 40, 27, 13.5];
  return (
    <svg viewBox="0 0 58 56" className="h-14 w-[58px]">
      {heights.map((h, i) => (
        <g key={i}>
          <rect x={i * 8.4} y={47 - h} width="6.700" height={h} fill="#808284" />
          <rect x={i * 8.4 + 1.6} y="50" width="3.800" height="4" fill="#b4b5b6" />
        </g>
      ))}
    </svg>
  );
}

function TimeSeriesArt() {
  return (
    <svg viewBox="0 0 60 60" className="size-[60px]">
      <path d="M3 30C6 20 8 12.500 12 12.500 17 12.500 20 25 23 31 26 38 29 40 32 37 35 33 38 32 40 36 42 41 43 44 46 46L54.500 50" fill="none" stroke="#2a70da" strokeWidth="3.200" />
      <g fill="none" stroke="#7fa7e9" strokeWidth="2.200">
        <circle cx="46.500" cy="14" r="11.300" />
      </g>
      <path d="M43.500 9v11l7.500-5.500Z" fill="#7fa7e9" />
      {[0, 1, 2, 3, 4, 5, 6].map((i) => (
        <rect key={i} x={1.5 + i * 8.3} y="56" width="4" height="4" fill="#7fa7e9" />
      ))}
    </svg>
  );
}

/* ------------------------------------------------------------------ */
/* Header and toolbar                                                  */
/* ------------------------------------------------------------------ */

function Header() {
  return (
    <header className="flex h-[90px] shrink-0 items-center bg-[#2a70da] pr-[6px] pb-[6px] pl-[22px] text-white">
      <div className="flex size-16 items-center justify-center rounded-full bg-[#5a8fe3]">
        <div className="size-[22px] rounded-full bg-white" />
      </div>
      <h1 className="ml-6 text-[32px] leading-10 font-medium tracking-[0.2px]">CARTO Builder</h1>
      <svg viewBox="0 0 12 30" className="ml-[25px] h-[30px] w-3" stroke="#7fa7e9" strokeWidth="2.200">
        <path d="M11 1 1 29" />
      </svg>
      <h2 className="ml-6 text-[26px] leading-8 font-medium tracking-[0.44px]">San Francisco Street Trees</h2>
      <div className="ml-[52px] flex items-center gap-4 text-[#a6c3f0]">
        <MdOutlineCloudDone className="size-9" />
        <span className="text-[22px] leading-8 font-medium tracking-[0.5px]">Updated</span>
      </div>
      <div className="ml-auto flex items-center">
        <button className="flex size-16 items-center justify-center rounded-lg bg-[#467fdf]">
          <MdOutlinePublish className="size-9" />
        </button>
        <button className="ml-4 flex h-16 w-[178px] items-center gap-[13px] rounded-lg border-2 border-[#7fa7e9] pl-[22px]">
          <MdPublic className="size-9" />
          <span className="text-[26px] leading-8 font-medium tracking-[0.4px]">Share</span>
        </button>
        <button className="ml-4 flex size-16 items-center justify-center">
          <MdMoreVert className="size-12" />
        </button>
        <button className="ml-8 flex size-16 items-center justify-center">
          <MdHelpOutline className="size-12" />
        </button>
        <div className="ml-4 flex size-[72px] items-center justify-center rounded-full border-2 border-[#2a5a9c] bg-[#58b99e] text-[26px] leading-8 text-[#dcf1ec]">
          AL
        </div>
      </div>
    </header>
  );
}

function Tab({ active, children }: { active?: boolean; children: ReactNode }) {
  return (
    <div className={active ? "flex w-28 items-center justify-center border-b-4 border-[#2a70da] pt-1 text-[#2a70da]" : "flex w-28 items-center justify-center text-[#2c3032]"}>
      {children}
    </div>
  );
}

function Toolbar() {
  return (
    <div className="flex h-[98px] shrink-0 border-b-2 border-[#e4e6e5] bg-white">
      <nav className="flex w-[632px] border-r-2 border-[#ebeceb] pl-[22px]">
        <Tab><LayersIcon /></Tab>
        <Tab active><WidgetsTabIcon /></Tab>
        <Tab><MdAdsClick className="size-9" /></Tab>
        <Tab><MdOutlineListAlt className="size-9" /></Tab>
        <Tab><MdOutlineMap className="size-9" /></Tab>
      </nav>
      <div className="flex w-[827px] items-center pl-[14px]">
        <button className="flex size-16 items-center justify-center rounded-lg bg-[#edf2fc] text-[#2a70da]">
          <PanelIcon />
        </button>
      </div>
      <div className="flex w-[320px] items-center border-l-2 border-[#e4e6e5] pl-[31px] text-[#828485]">
        <span className="w-[135px] text-[22px] leading-8 tracking-[0.4px]">Map view</span>
        <button className="flex size-16 items-center justify-center rounded-lg bg-[#edf2fc] text-[#2a70da]">
          <FlatMapIcon />
        </button>
        <button className="ml-2 flex size-16 items-center justify-center">
          <CubeIcon />
        </button>
      </div>
      <div className="flex w-[98px] items-center justify-center border-l-2 border-[#e4e6e5] text-[#828485]">
        <SplitIcon />
      </div>
      <div className="flex w-[162px] items-center border-l-2 border-[#e4e6e5] pl-[33px] text-[#828485]">
        <LassoIcon />
        <Caret className="ml-[42px] h-[7px] w-[14px]" />
      </div>
      <div className="flex flex-1 items-center justify-end border-l-2 border-[#e4e6e5] pr-[6px]">
        <button className="flex size-16 items-center justify-center rounded-lg bg-[#edf2fc] text-[#2a70da]">
          <MdOutlineInsertChartOutlined className="size-9" />
        </button>
      </div>
    </div>
  );
}

/* ------------------------------------------------------------------ */
/* Sidebar                                                             */
/* ------------------------------------------------------------------ */

function TypeCard({ art, label, selected }: { art: ReactNode; label: string; selected?: boolean }) {
  if (selected) {
    return (
      <div className="flex h-48 w-36 shrink-0 flex-col items-center rounded-lg border-4 border-[#2a70da] bg-white pt-[30px] text-center text-[22px] leading-8 font-medium text-[#2a70da]">
        <div className="pl-px">{art}</div>
        <span className="mt-[21px] w-20">{label}</span>
      </div>
    );
  }
  return (
    <div className="flex h-48 w-36 shrink-0 flex-col items-center rounded-lg border-2 border-[#e4e6e5] bg-white pt-[37px] text-[22px] leading-8 font-medium tracking-[0.3px] text-[#2c3032]">
      <div className="flex h-14 items-end">{art}</div>
      <span className="mt-[34px]">{label}</span>
    </div>
  );
}

function Section({ title, first, children }: { title: string; first?: boolean; children: ReactNode }) {
  return (
    <section className={first ? "flex h-[363px] shrink-0 pl-[66px]" : "flex min-h-0 flex-1 pl-[66px]"}>
      <div className="flex w-8 shrink-0 flex-col items-center">
        <div className={first ? "h-1 w-1" : "h-1 w-1 bg-[#dfe1e0]"} />
        <svg viewBox="0 0 32 32" className="size-8 shrink-0" fill="none" stroke="#2c3032" strokeWidth="4" strokeLinejoin="round">
          <path d="M16 3 29 16 16 29 3 16Z" />
        </svg>
        <div className="w-1 flex-1 bg-[#dfe1e0]" />
      </div>
      <div className="ml-3 w-[462px]">
        <h3 className="text-[26px] leading-10 tracking-[0.35px] text-[#2c3032]">{title}</h3>
        {children}
      </div>
    </section>
  );
}

function Label({ children, className }: { children: ReactNode; className: string }) {
  return <div className={`text-[22px] leading-8 tracking-[0.52px] ${className}`}>{children}</div>;
}

function Select({ icon, value, indent }: { icon?: ReactNode; value: string; indent: string }) {
  return (
    <div className={`mt-1 flex h-16 items-center rounded-lg border-2 border-[#babcbb] pr-[26px] pb-px ${indent}`}>
      {icon}
      <span className="text-[26px] leading-8 font-medium tracking-[0.3px]">{value}</span>
      <Caret className="ml-auto h-[10px] w-5 text-[#a5a7a7]" />
    </div>
  );
}

function Toggle() {
  return (
    <div className="flex h-8 w-12 items-center rounded-full border-2 border-[#7d7f80] bg-white pl-[6px]">
      <div className="size-4 rounded-full bg-[#7d7f80]" />
    </div>
  );
}

function Sidebar() {
  return (
    <aside className="flex w-[632px] shrink-0 border-r-2 border-[#e8eae9] text-[#2c3032]">
      <div className="flex w-[620px] flex-col">
        <div className="mt-7 flex h-16 shrink-0 items-center pl-[27px]">
          <MdArrowBack className="size-10 text-[#2a70da]" />
          <span className="ml-3 text-[24px] leading-8 font-medium text-[#2a70da]">Back</span>
          <span className="ml-[13px] text-[22px] leading-8 text-[#828485]">/</span>
          <span className="ml-3 text-[22px] leading-8 tracking-[0.5px] text-[#828485]">Widget options</span>
        </div>
        <div className="mt-[33px] ml-[38px] flex w-[534px] shrink-0 justify-end gap-4 overflow-hidden">
          <TypeCard
            label="Formula"
            art={
              <div className="flex h-14 w-[60px] flex-col items-center">
                <span className="mt-[13px] pl-2.5 text-[26px] leading-8 font-semibold tracking-[6px] text-[#808284]">123</span>
                <div className="h-1 w-[60px] bg-[#cbcccc]" />
              </div>
            }
          />
          <TypeCard label="Category" art={<CategoryArt />} />
          <TypeCard label="Histogram" art={<HistogramArt />} />
          <TypeCard label="Time Series" art={<TimeSeriesArt />} selected />
        </div>
        <div className="h-14 shrink-0" />
        <Section title="Data" first>
          <Label className="mt-[39px]">Operation</Label>
          <Select
            value="COUNT"
            indent="pl-[29px]"
            icon={
              <span className="mr-[9px] text-[#808284]">
                <FunctionIcon />
              </span>
            }
          />
          <div className="mt-6 flex items-center">
            <span className="flex size-8 items-center justify-center rounded bg-[#74418a] font-['DejaVu_Sans_Mono',monospace] text-[22px] text-white">A</span>
            <span className="ml-4 text-[22px] leading-8 tracking-[0.5px]">san_francisco_street_trees</span>
          </div>
          <div className="mt-2 flex h-16 items-center rounded-lg border-2 border-[#c3c5c4] pb-px pl-4">
            <span className="mt-[7px] flex h-8 w-[76px] items-center justify-center rounded border-2 border-[#7ba04f] bg-[#dfe7d6] pb-0.5 font-['DejaVu_Sans_Mono',monospace] text-[22px] text-[#7ba04f]">
              Time
            </span>
            <span className="ml-2.5 text-[26px] leading-8 font-medium tracking-[0.6px]">plant_date</span>
          </div>
        </Section>
        <Section title="Display options">
          <Label className="mt-[38px]">Aggregate by</Label>
          <Select value="day" indent="pl-[22px]" />
          <div className="mt-8 flex items-center gap-4">
            <Toggle />
            <span className="text-[22px] leading-8 tracking-[0.5px]">Animation controls</span>
          </div>
          <Label className="mt-[46px]">Formatting</Label>
          <Select
            value="None"
            indent="pl-[30px]"
            icon={
              <span className="mr-2.5 text-[#808284]">
                <HashIcon />
              </span>
            }
          />
          <div className="mt-10 flex items-center gap-4 pl-4">
            <Toggle />
            <span className="text-[26px] leading-8 font-medium tracking-[0.45px]">Collapsible widget</span>
          </div>
        </Section>
      </div>
      <div className="mt-[226px] h-[912px] w-[10px] rounded-full bg-[#dfe1e0]" />
    </aside>
  );
}

/* ------------------------------------------------------------------ */
/* Map card, charts                                                    */
/* ------------------------------------------------------------------ */

function MapCard() {
  return (
    <div className="relative mx-0.5 h-[668px] overflow-hidden rounded-lg">
      <StreetTreeMap />
      <div className="absolute bottom-12 left-12 w-[72px] overflow-hidden rounded-lg bg-white">
        <div className="flex h-[72px] items-center justify-center border-b-2 border-[#dfe1e0]">
          <svg viewBox="0 0 28 28" className="size-7" stroke="#2c3032" strokeWidth="4">
            <path d="M0 14h28M14 0v28" />
          </svg>
        </div>
        <div className="flex h-[72px] items-center justify-center border-b-2 border-[#dfe1e0] text-[24px] leading-8 font-medium text-[#6f7274]">11</div>
        <div className="flex h-[72px] items-center justify-center">
          <svg viewBox="0 0 28 28" className="size-7" stroke="#2c3032" strokeWidth="4">
            <path d="M0 14h28" />
          </svg>
        </div>
      </div>
      <button className="absolute top-12 right-12 flex size-16 items-center justify-center rounded-lg bg-white text-[#828485]">
        <MdInfoOutline className="size-9" />
      </button>
      <button className="absolute right-8 bottom-12 flex size-16 items-center justify-center rounded-lg bg-white text-[#2c3032]">
        <LayersIcon />
      </button>
      <div className="absolute right-4 bottom-4 flex h-[31px] w-[402px] items-center justify-center rounded-tl-lg bg-[#8f8f8f] text-[18px] tracking-[0.53px] whitespace-pre text-[#2c3032]">
        © <span className="text-[#2468cf]">CARTO</span>, © <span className="text-[#2468cf]">OpenStreetMap</span> contributors
      </div>
    </div>
  );
}

const GRID = [43, 47, 89, 131, 171, 213];
const YEARS: [string, number][] = [
  ["1968", 274],
  ["1981", 565],
  ["1994", 858],
  ["2007", 1150],
  ["2020", 1442],
];

function TimeSeriesWidget() {
  return (
    <div className="mt-[18px] flex h-[506px] flex-col rounded-lg border-4 border-[#2a70da] bg-white">
      <div className="flex h-[112px] items-center justify-between pr-[52px] pl-8">
        <h2 className="text-[32px] leading-10 font-medium tracking-[0.3px] text-[#2c3032]">Widget 2</h2>
        <Dots className="h-[26px] w-2 text-[#808284]" />
      </div>
      <div className="-mt-1.5 flex h-8 gap-4 pl-8 text-[22px] leading-8 text-[#828485]">
        <span className="tracking-[0.62px]">20/10/1955 - 30/08/2021</span>
        <span className="tracking-[1.2px]">(Day)</span>
      </div>
      <div className="relative mt-[26px] ml-16 w-[1480px]">
        <svg viewBox="0 0 1480 310" className="block h-[310px] w-[1480px]">
          <text x="-1" y="26" fill="#828485" className="font-['Open_Sans'] text-[20px] tracking-[1.1px]">51233</text>
          {GRID.map((y) => (
            <path key={y} d={`M0 ${y}H1480`} stroke="#f2f3f3" strokeWidth="2" />
          ))}
          <path d="M318.500 254V42" stroke="#75d89e" strokeWidth="5.500" strokeLinecap="round" />
          <path d="M0 254H1480" stroke="#75d89e" strokeWidth="5.500" />
          <circle cx="866" cy="254" r="5.800" fill="#fff" stroke="#75d89e" strokeWidth="4" />
          <path d="M866.500 60V254" stroke="#a5a7a7" strokeWidth="2" strokeDasharray="8 4" />
          {YEARS.map(([year, x]) => (
            <text key={year} x={x} y="290.500" textAnchor="middle" fill="#2c3032" className="text-[24px] tracking-[0.3px]">
              {year}
            </text>
          ))}
        </svg>
        <div className="absolute -top-[22px] left-[866px] h-24 w-[352px] rounded-lg bg-[#414446] px-4 pt-3 text-[24px] leading-8 text-white shadow-[0_8px_24px_rgba(0,0,0,0.22)]">
          <div className="font-semibold tracking-[0.6px]">04/05/1994</div>
          <div className="mt-2 flex items-center justify-between">
            <div className="size-4 rounded-full bg-[#75d89e]" />
            <span className="font-medium">6</span>
          </div>
        </div>
      </div>
    </div>
  );
}

const CATEGORIES: [string, number][] = [
  ["Tree(s) ::", 9212],
  ["Tristaniopsis laurina :: Swam...", 4467],
  ["Lophostemon confertus :: Br...", 4206],
  ["Prunus cerasifera :: Cherry P...", 4030],
  ["Arbutus 'Marina' :: Hybrid Str...", 3551],
];

function CategoryRow({ name, value, share, other }: { name: string; value: number; share: number; other?: boolean }) {
  return (
    <div className="h-[64.4px]">
      <div className="flex justify-between text-[26px] leading-8 text-[#2c3032]">
        <span className="font-semibold tracking-[0.22px] whitespace-nowrap">{name}</span>
        <span className="tracking-[0.5px]">{value}</span>
      </div>
      <div className="mt-[9px] h-2 overflow-hidden rounded-full bg-[#e4e6e5]">
        <div className={other ? "h-full rounded-full bg-[#b5b7b6]" : "h-full rounded-full bg-[#75d89e]"} style={{ width: `${share * 100}%` }} />
      </div>
    </div>
  );
}

function CategoryWidget() {
  return (
    <div className="mt-[17px] ml-4 h-[640px] w-[576px] rounded-lg border-2 border-[#e4e6e5] bg-white pr-12 pl-8">
      <div className="flex items-center justify-between pt-[35px] pr-1">
        <h2 className="text-[32px] leading-10 font-medium tracking-[0.3px] text-[#2c3032]">Widget 1</h2>
        <Dots className="h-[26px] w-2 text-[#808284]" />
      </div>
      <div className="mt-5 text-[22px] leading-8 tracking-[0.5px] text-[#2c3032]">All selected</div>
      <div className="mt-[26px]">
        {CATEGORIES.map(([name, value]) => (
          <CategoryRow key={name} name={name} value={value} share={value / 9212} />
        ))}
        <CategoryRow name="Others" value={73573} share={1} other />
      </div>
      <div className="mt-6 flex items-center gap-5 pl-[23px] text-[#2a70da]">
        <SearchIcon />
        <span className="text-[24px] leading-8 font-medium tracking-[0.35px]">Search in 524 elements</span>
      </div>
    </div>
  );
}

export default function App() {
  return (
    <div className="relative flex h-[1406px] w-[2860px] flex-col overflow-hidden bg-[#f8faf9] font-[Inter,sans-serif]">
      <Header />
      <Toolbar />
      <div className="flex min-h-0 flex-1">
        <Sidebar />
        <main className="ml-[14px] w-[1616px] pt-[18px]">
          <MapCard />
          <TimeSeriesWidget />
        </main>
        <CategoryWidget />
      </div>
      <div className="pointer-events-none absolute top-[1420px] right-[70px] left-[60px] h-40 shadow-[0_0_80px_rgba(0,0,0,0.32)]" />
    </div>
  );
}
